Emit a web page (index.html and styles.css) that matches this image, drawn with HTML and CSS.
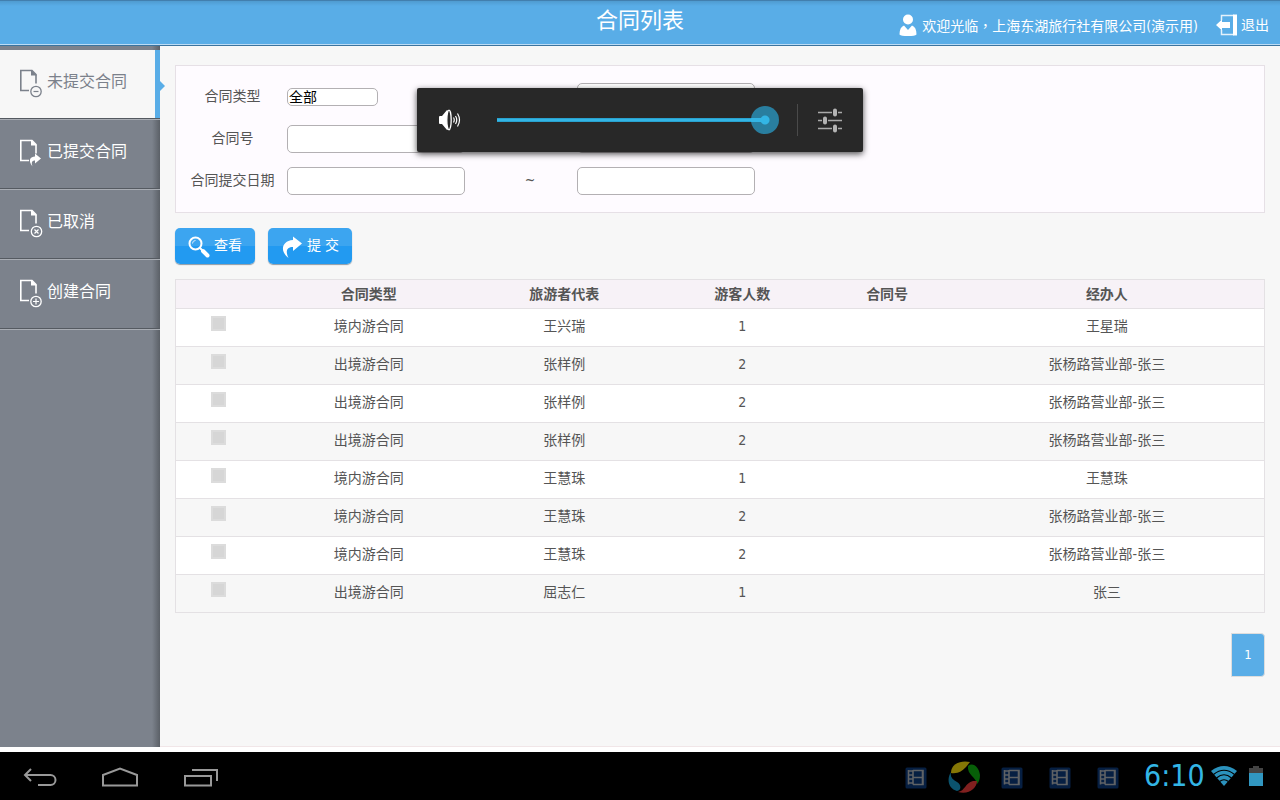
FILE: index.html
```html
<!DOCTYPE html>
<html lang="zh-CN">
<head>
<meta charset="utf-8">
<meta name="viewport" content="width=device-width, initial-scale=1">
<title>合同列表</title>
<link rel="stylesheet" href="styles.css">
</head>
<body>
<svg class="defs" aria-hidden="true">
  <symbol id="doc" viewBox="0 0 24 30">
    <path d="M9 21.500H.8V1.500H12l4 4v9" fill="none" stroke="currentColor" stroke-width="1.600"/>
    <path d="M11 .8v5.700H16.800z" fill="currentColor"/>
  </symbol>
  <symbol id="film" viewBox="0 0 22 22">
    <rect x="0.500" y="0.500" width="21" height="21" rx="1.500" fill="#061f42"/>
    <path d="M4 4h3.500M4 8h3.500M4 12h3.500M4 16h3.500M3.500 3v14.500M8 3v14.500M8 3.500h10v14H8M8 10.500h10M17.500 3v15" fill="none" stroke="#5f6265" stroke-width="1.600"/>
  </symbol>
</svg>
<div class="screen">
  <header class="topbar">
    <h1 class="title">合同列表</h1>
    <div class="account">
      <svg class="user-icon" viewBox="0 0 18 22" width="18" height="22" aria-hidden="true"><circle cx="9" cy="5.500" r="5" fill="#fff"/><path d="M5 11.500L9 16l4-4.500c3 1 4.500 4 4.500 9Q16 22 9 22T.5 20.500c0-5 1.500-8 4.500-9z" fill="#fff"/></svg>
      <span class="welcome">欢迎光临<span class="comma" lang="zh-TW">，</span>上海东湖旅行社有限公司(演示用)</span>
      <a class="logout" href="#"><svg viewBox="0 0 22 22" width="22" height="22" aria-hidden="true"><path d="M5.500 6V1.500H18M5.500 16v4.500H18" fill="none" stroke="#e4f1fb" stroke-width="1.500"/><path d="M17 .5h4v21h-4z" fill="#fff"/><path d="M0 11l6-5.500V8h8v6H6v2.500z" fill="#fff"/></svg>退出</a>
    </div>
  </header>

  <div class="body">
    <nav class="sidebar">
      <a class="nav-item active" href="#"><svg class="nav-icon" viewBox="0 0 24 30" aria-hidden="true"><use href="#doc"/><circle cx="16" cy="22.500" r="5.200" class="badge"/><path d="M13.500 22.500h5" class="mark"/></svg>未提交合同</a>
      <a class="nav-item" href="#"><svg class="nav-icon" viewBox="0 0 24 30" aria-hidden="true"><use href="#doc"/><path d="M12.500 27.500C7.500 21 10.500 17.500 15 17.500V14.500l6 5-6 5V21.500c-3 0-4 2-2.500 6z" fill="currentColor"/></svg>已提交合同</a>
      <a class="nav-item" href="#"><svg class="nav-icon" viewBox="0 0 24 30" aria-hidden="true"><use href="#doc"/><circle cx="16.500" cy="22.500" r="5.200" class="badge"/><path d="M14.500 20.500l4 4m0-4l-4 4" class="mark"/></svg>已取消</a>
      <a class="nav-item" href="#"><svg class="nav-icon" viewBox="0 0 24 30" aria-hidden="true"><use href="#doc"/><circle cx="16" cy="22.500" r="5.200" class="badge"/><path d="M13 22.500h6m-3-3v6" class="mark"/></svg>创建合同</a>
    </nav>

    <main class="content">
      <form class="filters">
        <label for="type">合同类型</label>
        <select id="type" class="type-select"><option>全部</option></select>
        <span></span>
        <input type="text" aria-label="旅游者代表">
        <label for="number">合同号</label>
        <input type="text" id="number">
        <span></span>
        <input type="text" aria-label="经办人">
        <label for="from">合同提交日期</label>
        <input type="text" id="from">
        <label for="to">~</label>
        <input type="text" id="to">
      </form>

      <div class="actions">
        <button type="button" class="btn"><svg viewBox="0 0 22 22" width="22" height="22" aria-hidden="true"><circle cx="7.500" cy="7.500" r="6" fill="none" stroke="#fff" stroke-width="2"/><path d="M12 12l2.500 2.500" stroke="#fff" stroke-width="2"/><path d="M15 15l4.500 4.500" stroke="#fff" stroke-width="4" stroke-linecap="round"/><path d="M4.500 7.500q0-3 3-3" stroke="#d8ecfc" fill="none"/></svg>查看</button>
        <button type="button" class="btn"><svg viewBox="0 0 22 22" width="22" height="22" aria-hidden="true"><path d="M7.500 22C-1 16 0 5 12 4V.5l9 7L12 15v-4C6 11 4 15 7.500 22z" fill="#fff"/></svg>提 交</button>
      </div>

      <table class="contracts">
        <colgroup><col class="c-check"><col class="c-type"><col class="c-guest"><col class="c-count"><col class="c-number"><col class="c-agent"></colgroup>
        <thead><tr><th></th><th>合同类型</th><th>旅游者代表</th><th>游客人数</th><th>合同号</th><th>经办人</th></tr></thead>
        <tbody>
          <tr><td><input type="checkbox" aria-label="选择"></td><td>境内游合同</td><td>王兴瑞</td><td>1</td><td></td><td>王星瑞</td></tr>
          <tr><td><input type="checkbox" aria-label="选择"></td><td>出境游合同</td><td>张样例</td><td>2</td><td></td><td>张杨路营业部-张三</td></tr>
          <tr><td><input type="checkbox" aria-label="选择"></td><td>出境游合同</td><td>张样例</td><td>2</td><td></td><td>张杨路营业部-张三</td></tr>
          <tr><td><input type="checkbox" aria-label="选择"></td><td>出境游合同</td><td>张样例</td><td>2</td><td></td><td>张杨路营业部-张三</td></tr>
          <tr><td><input type="checkbox" aria-label="选择"></td><td>境内游合同</td><td>王慧珠</td><td>1</td><td></td><td>王慧珠</td></tr>
          <tr><td><input type="checkbox" aria-label="选择"></td><td>境内游合同</td><td>王慧珠</td><td>2</td><td></td><td>张杨路营业部-张三</td></tr>
          <tr><td><input type="checkbox" aria-label="选择"></td><td>境内游合同</td><td>王慧珠</td><td>2</td><td></td><td>张杨路营业部-张三</td></tr>
          <tr><td><input type="checkbox" aria-label="选择"></td><td>出境游合同</td><td>屈志仁</td><td>1</td><td></td><td>张三</td></tr>
        </tbody>
      </table>

      <div class="pager"><a class="page" href="#">1</a></div>
    </main>
  </div>

  <footer class="system-bar">
    <div class="system-keys">
      <button type="button" aria-label="返回"><svg viewBox="0 0 36 22" width="36" height="22"><path d="M9 2L3 8l6 6M3 8h25.500a5 5 0 0 1 0 10H16" fill="none" stroke="#999" stroke-width="2"/></svg></button>
      <button type="button" aria-label="主屏幕"><svg viewBox="0 0 38 22" width="38" height="22"><path d="M1 18.500V8L18 1.500 35 8v10.500z" fill="none" stroke="#999" stroke-width="2"/></svg></button>
      <button type="button" aria-label="最近任务"><svg viewBox="0 0 36 22" width="36" height="22"><path d="M1 9h26v9.500H1zM8 3h25v11" fill="none" stroke="#999" stroke-width="2"/></svg></button>
    </div>
    <div class="status">
      <svg class="tray" viewBox="0 0 22 22" aria-hidden="true"><use href="#film"/></svg>
      <svg class="tray tray-app" viewBox="0 0 32 32" aria-hidden="true"><path d="M3 12C3 3 12-1 22 1L18 6C14 10 10 13 3 12z" fill="#857706"/><path d="M20 5C25 1 31 6 32 14c0 4-1 7-3 9-1-7-10-9-9-18z" fill="#075f08"/><path d="M29 20c0 7-8 14-19 11 7-1 7-9 15-11z" fill="#81201f"/><path d="M3 11c-5 8-2 17 6 19 5-1 4-7 0-9-5-3-7-5-6-10z" fill="#0b536d"/></svg>
      <svg class="tray" viewBox="0 0 22 22" aria-hidden="true"><use href="#film"/></svg>
      <svg class="tray" viewBox="0 0 22 22" aria-hidden="true"><use href="#film"/></svg>
      <svg class="tray" viewBox="0 0 22 22" aria-hidden="true"><use href="#film"/></svg>
      <time class="clock">6:10</time>
      <svg class="wifi" viewBox="0 0 26 20" width="26" height="20" aria-hidden="true"><path d="M0 5Q13-5 26 5L13 20z" fill="#2b92bd"/><path d="M2.500 8.500Q13 0 23.500 8.500M5.500 12Q13 5.500 20.500 12M8.500 15.500q4.500-3.500 9 0" fill="none" stroke="#000" stroke-width="1.200"/></svg>
      <svg class="battery" viewBox="0 0 14 22" width="14" height="22" aria-hidden="true"><path d="M0 3h4V1h6v2h4v5H0z" fill="#444"/><path d="M0 8h14v13H0z" fill="#3197c1"/></svg>
    </div>
  </footer>

  <div class="volume">
    <svg class="speaker" viewBox="0 0 22 22" width="22" height="22" aria-hidden="true"><path d="M0 8q0-1 1-1h2l5-6q2 0 2 10t-2 10l-5-6H1q-1 0-1-1z" fill="#fff"/><ellipse cx="10" cy="11" rx="2.200" ry="9.800" fill="#282828" stroke="#fff" stroke-width="1.300"/><path d="M14.500 8.500q1.500 2.500 0 5M16.500 7q2.500 4 0 8M18.500 4.500q4 6.500 0 13" fill="none" stroke="#fff" stroke-width="1.200"/></svg>
    <input class="slider" type="range" min="0" max="100" value="100" aria-label="音量">
    <button type="button" class="mixer" aria-label="音量设置"><svg viewBox="0 0 24 26" width="24" height="26"><path d="M0 5.500h14M20 5.500h4M0 13.500h4M10 13.500h14M0 21.500h14M20 21.500h4" stroke="#aaa" stroke-width="1.300"/><path d="M17 3.500v4M7 11.500v4M17 19.500v4" stroke="#b4b4b4" stroke-width="4" stroke-linecap="round"/></svg></button>
  </div>
</div>
</body>
</html>
```
FILE: styles.css
```css
* { box-sizing: border-box; }
body {
  margin: 0;
  background: #fff;
  color: #555;
  font: 14px/20px "DejaVu Sans Condensed", "Noto Sans CJK SC", sans-serif;
}
a { color: inherit; text-decoration: none; }
button { font: inherit; border: 0; background: none; padding: 0; }
svg { flex: none; }
.defs { position: absolute; width: 0; height: 0; }
.screen { position: relative; min-height: 100vh; display: flex; flex-direction: column; }

.topbar {
  display: grid;
  grid-template-columns: 1fr auto 1fr;
  height: 46px;
  padding: 0 11px;
  color: #fff;
  border-top: 1px solid #427fae;
  border-bottom: 1px solid #3b749f;
  background: linear-gradient(#4f9bd0, #59ade7 5px);
  box-shadow: inset 0 -1px #bcdcf5;
}
.title { grid-column: 2; margin: 0; font-size: 22px; line-height: 40px; font-weight: 400; }
.account { grid-column: 3; display: flex; justify-content: flex-end; align-items: center; padding-top: 4px; white-space: nowrap; }
.user-icon { margin-right: 5px; }
.comma { font-family: "Noto Sans CJK TC", sans-serif; }
.logout { display: flex; align-items: center; gap: 3px; margin-left: 18px; }

.body { flex: 1; display: flex; margin-bottom: 5px; }
.sidebar {
  flex: none;
  width: 160px;
  padding-top: 4px;
  background: linear-gradient(to left, #5b6067, #7c828c 8px);
}
.nav-item {
  position: relative;
  display: flex;
  align-items: center;
  gap: 3px;
  height: 70px;
  padding: 0 0 6px 20px;
  color: #fff;
  font-size: 16px;
  border-bottom: 1px solid #a9adb4;
  box-shadow: inset 0 -1px #555a61;
}
.nav-item.active {
  color: #7b818b;
  background: linear-gradient(to left, #59ade7 5px, #f7f7f7 5px);
}
.nav-item.active::after {
  content: "";
  position: absolute;
  left: 100%;
  top: 31px;
  border: 5px solid transparent;
  border-left-color: #59ade7;
  border-right: 0;
}
.nav-icon { width: 24px; height: 30px; margin-top: 4px; }
.badge { fill: #7c828c; stroke: currentColor; stroke-width: 1.3; }
.active .badge { fill: #f7f7f7; }
.mark { fill: none; stroke: currentColor; stroke-width: 1.2; }

.content { flex: 1; padding: 19px 15px 0; background: #f7f7f7; border-bottom: 1px solid #f1e6e8; }
.filters {
  display: grid;
  grid-template-columns: 111px 178px 112px 178px;
  grid-auto-rows: 42px;
  align-items: center;
  padding: 10px 0;
  background: #fefbff;
  border: 1px solid #e6e0e6;
}
.filters label { text-align: center; padding: 0 0 2px 2px; }
.filters label[for="to"] { padding-left: 18px; }
.filters input { width: 100%; height: 28px; border: 1px solid #b3b0b3; border-radius: 5px; background: #fff; }
.type-select {
  appearance: none;
  width: 91px;
  height: 18px;
  padding: 0 1px;
  font: 14px/16px "DejaVu Sans Condensed", "Noto Sans CJK SC", sans-serif;
  color: #000;
  border: 1px solid #b3b0b3;
  border-radius: 5px;
  background: #fff;
}

.actions { display: flex; gap: 13px; margin: 15px 0; }
.btn {
  display: flex;
  align-items: center;
  gap: 4px;
  height: 36px;
  padding: 0 13px 2px;
  color: #fff;
  border-radius: 5px;
  background: linear-gradient(#3ca5f0 50%, #229af1 50%);
  box-shadow: 0 1px 1px #8d9aa5;
}
.btn svg { margin-top: 3px; }

.contracts { width: 100%; table-layout: fixed; border-collapse: collapse; border: 1px solid #e4e1e4; }
.c-check { width: 8.6%; }
.c-type { width: 18.3%; }
.c-guest { width: 17.6%; }
.c-count { width: 15.1%; }
.c-number { width: 11.5%; }
.c-agent { width: 28.9%; }
.contracts th { height: 29px; padding: 0; background: #f7f2f7; }
.contracts td { height: 38px; padding: 0 0 4px; text-align: center; background: #fff; border-top: 1px solid #e4e1e4; }
.contracts tr:nth-child(even) td { background: #f7f7f7; }
.contracts td:first-child { padding: 0 8px 8px 0; }
.contracts input {
  appearance: none;
  display: block;
  width: 15px;
  height: 15px;
  margin: 0 auto;
  background: #d6d6d6;
  border: 2px solid #dcdcdc;
}

.pager { display: flex; justify-content: flex-end; margin-top: 20px; }
.page {
  width: 34px;
  height: 44px;
  border: 1px solid #ddd;
  border-radius: 0 4px 4px 0;
  background: #59ade7;
  color: #fff;
  font-size: 13px;
  line-height: 42px;
  text-align: center;
}

.system-bar { display: flex; justify-content: space-between; height: 48px; background: #000; }
.system-keys { display: flex; align-items: center; gap: 44px; padding: 4px 0 0 22px; }
.system-keys button { display: flex; }
.status { display: flex; align-items: center; padding-right: 17px; }
.tray { width: 22px; height: 22px; margin: 3px 13px 0; }
.tray-app { width: 32px; height: 32px; margin: 2px 8px 0; }
.clock { width: 60px; margin: 0 7px 0 12px; color: #33b5e5; font-size: 30px; line-height: 48px; }
.battery { margin-left: 12px; }

.volume {
  position: absolute;
  top: 88px;
  left: 50%;
  transform: translateX(-50%);
  display: flex;
  align-items: center;
  width: 446px;
  height: 64px;
  padding-left: 22px;
  border-radius: 2px;
  background: #282828;
  box-shadow: 0 2px 6px rgba(0, 0, 0, 0.7);
}
.slider { appearance: none; width: 282px; height: 28px; margin: 0 18px 0 36px; background: none; }
.slider::-webkit-slider-runnable-track {
  height: 28px;
  background: linear-gradient(#1f8fb8, #33b5e5 1px, #33b5e5 3px, #1f8fb8) left center / 268px 4px no-repeat;
}
.slider::-webkit-slider-thumb {
  appearance: none;
  width: 28px;
  height: 28px;
  border-radius: 50%;
  background:
    radial-gradient(circle, #33b5e5 4px, transparent 5px),
    linear-gradient(#33b5e5, #33b5e5) left center / 14px 4px no-repeat,
    #297e9f;
}
.mixer { display: flex; align-items: center; height: 32px; padding-left: 20px; border-left: 1px solid #4a4a4a; }
```
